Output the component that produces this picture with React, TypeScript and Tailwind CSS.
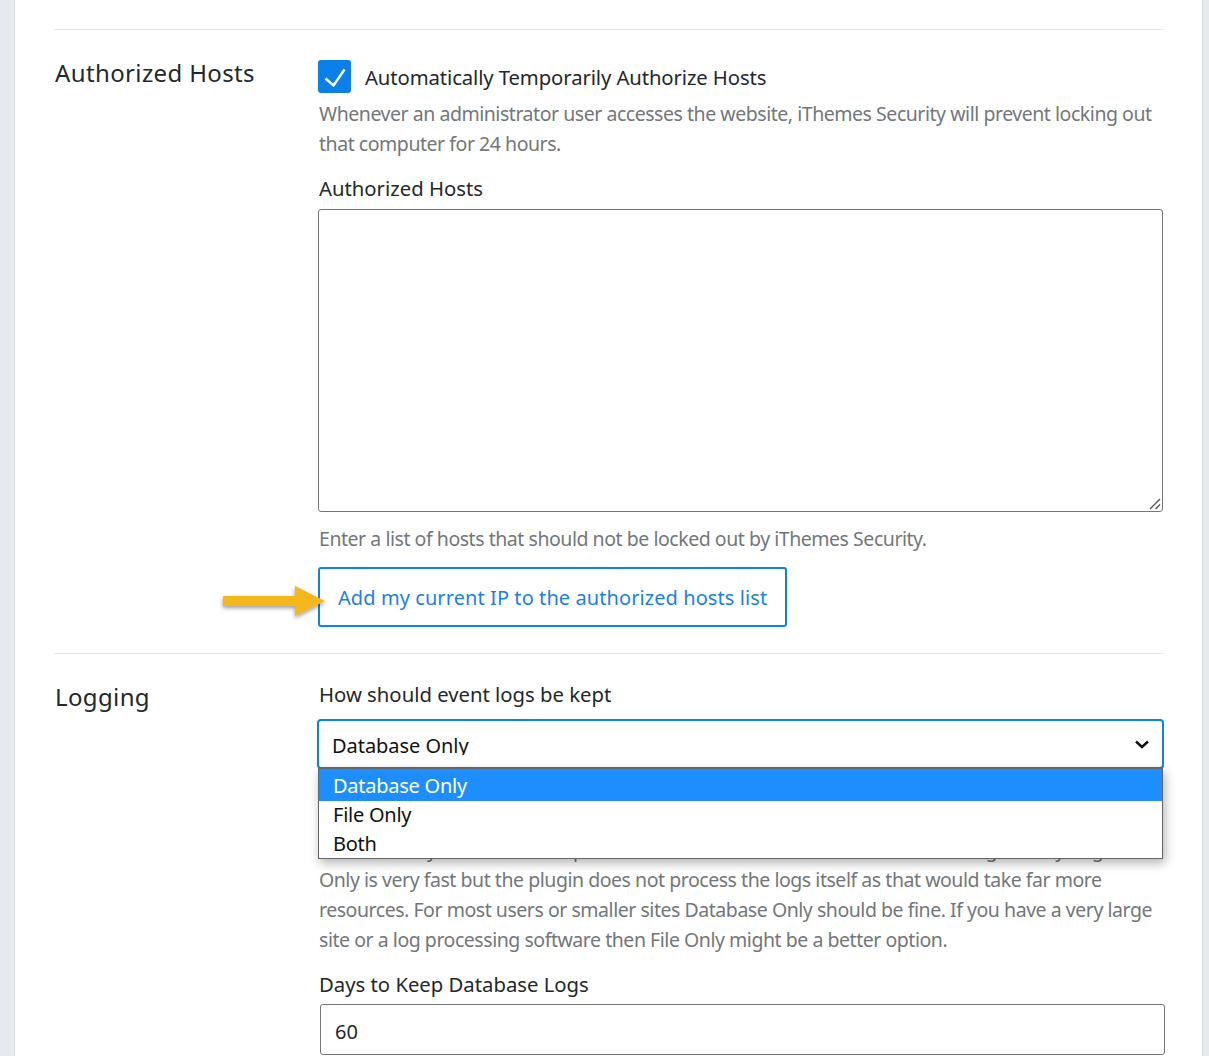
const font = "font-['Noto_Sans','Open_Sans',sans-serif]";

const Help = ({ children, className = "" }: { children: React.ReactNode; className?: string }) => (
  <p className={`pl-px text-[19.5px] leading-[30px] tracking-[-0.46px] text-[#72777c] ${className}`}>{children}</p>
);

const FieldLabel = ({ children, className = "" }: { children: React.ReactNode; className?: string }) => (
  <label className={`block pl-px text-[20.3px] leading-[30px] text-[#23282d] ${className}`}>{children}</label>
);

const SectionTitle = ({ children, className = "" }: { children: React.ReactNode; className?: string }) => (
  <h2 className={`w-[264px] shrink-0 pl-px text-[24px] leading-[36px] tracking-[0.37px] text-[#23282d] ${className}`}>{children}</h2>
);

const App = () => {
  return (
    <div className={`${font} h-[1056px] overflow-hidden bg-[#e6eaee] pl-[14px] pr-[6px]`}>
      <div className="h-full border-l border-r border-[#d9dde1] bg-white pl-[39px] pr-[38px] pt-[29px]">
        {/* Authorized Hosts */}
        <section className="flex h-[624px] border-t border-[#e6e9ec] pt-[25px]">
          <SectionTitle>Authorized Hosts</SectionTitle>
          <div className="relative flex-1">
            <div className="mt-[5px] flex items-center gap-[14px]">
              <span className="flex h-[33px] w-[33px] items-center justify-center rounded-[3px] bg-[#0a80e8]">
                <svg width="22" height="20" viewBox="0 0 22 20" fill="none">
                  <path d="M1.5 11.5l8 7 11-16" stroke="white" strokeWidth="2.4" />
                </svg>
              </span>
              <span className="text-[20.3px] leading-[30px] tracking-[-0.1px] text-[#23282d]">
                Automatically Temporarily Authorize Hosts
              </span>
            </div>
            <Help className="mt-[6px]">
              Whenever an administrator user accesses the website, iThemes Security will prevent locking out that computer for 24 hours.
            </Help>
            <FieldLabel className="mt-[14px]">Authorized Hosts</FieldLabel>
            <div className="relative mt-[6px] h-[303px] w-[845px]">
              <textarea className="block h-full w-full resize-none rounded-[3px] border border-[#767676] bg-white outline-none" />
              <svg className="absolute bottom-[2px] right-[2px]" width="12" height="12" viewBox="0 0 12 12" fill="none">
                <path d="M1 11L11 1M6.5 11L11 6.5" stroke="#555" strokeWidth="1.4" />
              </svg>
            </div>
            <Help className="mt-[12px]">Enter a list of hosts that should not be locked out by iThemes Security.</Help>
            <button className="mt-[13px] block h-[60px] w-[469px] rounded-[3px] border-2 border-[#0a84e8] pl-[18px] pt-[2px] text-left text-[20px] tracking-[0.08px] text-[#1a7fe8]">
              Add my current IP to the authorized hosts list
            </button>
            {/* annotation arrow */}
            <svg className="absolute left-[-100px] top-[531px]" width="112" height="40" viewBox="0 0 112 40">
              <defs>
                <filter id="arrowShadow" x="-20%" y="-50%" width="140%" height="200%">
                  <feDropShadow dx="0" dy="2" stdDeviation="2" floodColor="#000" floodOpacity="0.4" />
                </filter>
              </defs>
              <path d="M5 10h72V0l30 15-30 15V20H5z" fill="#f4b71e" filter="url(#arrowShadow)" />
            </svg>
          </div>
        </section>

        {/* Logging */}
        <section className="flex border-t border-[#e6e9ec] pt-[26px]">
          <SectionTitle className="mt-[-1px]">Logging</SectionTitle>
          <div className="relative flex-1">
            <FieldLabel className="mt-[-1px]">How should event logs be kept</FieldLabel>
            <div className="relative">
              <div className="ml-[-1px] mt-[10px] flex h-[50px] w-[847px] items-center justify-between rounded-[4px] border-2 border-[#0a84e8] pl-[13px] pr-[13px] text-[20px] tracking-[-0.05px] text-[#111]">
                <span className="block h-[21px] overflow-hidden leading-[24px]">Database Only</span>
                <svg width="14" height="9" viewBox="0 0 14 9" fill="none">
                  <path d="M1 1.5l6 5.5 6-5.5" stroke="#111" strokeWidth="2.4" />
                </svg>
              </div>
              <ul className="absolute left-0 top-[49px] z-10 h-[91px] w-[845px] border border-[#666] bg-white text-[20px] leading-[29.5px] tracking-[-0.25px] text-[#111] shadow-[2px_4px_10px_rgba(0,0,0,0.3)]">
                <li className="bg-[#1e8eff] pl-[14px] pt-[2px] text-white">Database Only</li>
                <li className="mt-[-1px] pl-[14px]">File Only</li>
                <li className="pl-[14px]">Both</li>
              </ul>
            </div>
            <Help className="mt-[6px]">
              iThemes Security can log events in multiple ways, each with advantages and disadvantages. Database Only puts all events in the database with your posts and other WordPress data. This makes it easy to retrieve and process but can be slower if the database table gets very large. File Only is very fast but the plugin does not process the logs itself as that would take far more resources. For most users or smaller sites Database Only should be fine. If you have a very large site or a log processing software then File Only might be a better option.
            </Help>
            <FieldLabel className="mt-[14px]">Days to Keep Database Logs</FieldLabel>
            <input
              readOnly
              value="60"
              className="ml-[2px] mt-[5px] block h-[51px] w-[845px] rounded-[3px] border border-[#767676] px-[14px] pt-[4px] text-[20px] text-[#23282d] outline-none"
            />
          </div>
        </section>
      </div>
    </div>
  );
};

export default App;
